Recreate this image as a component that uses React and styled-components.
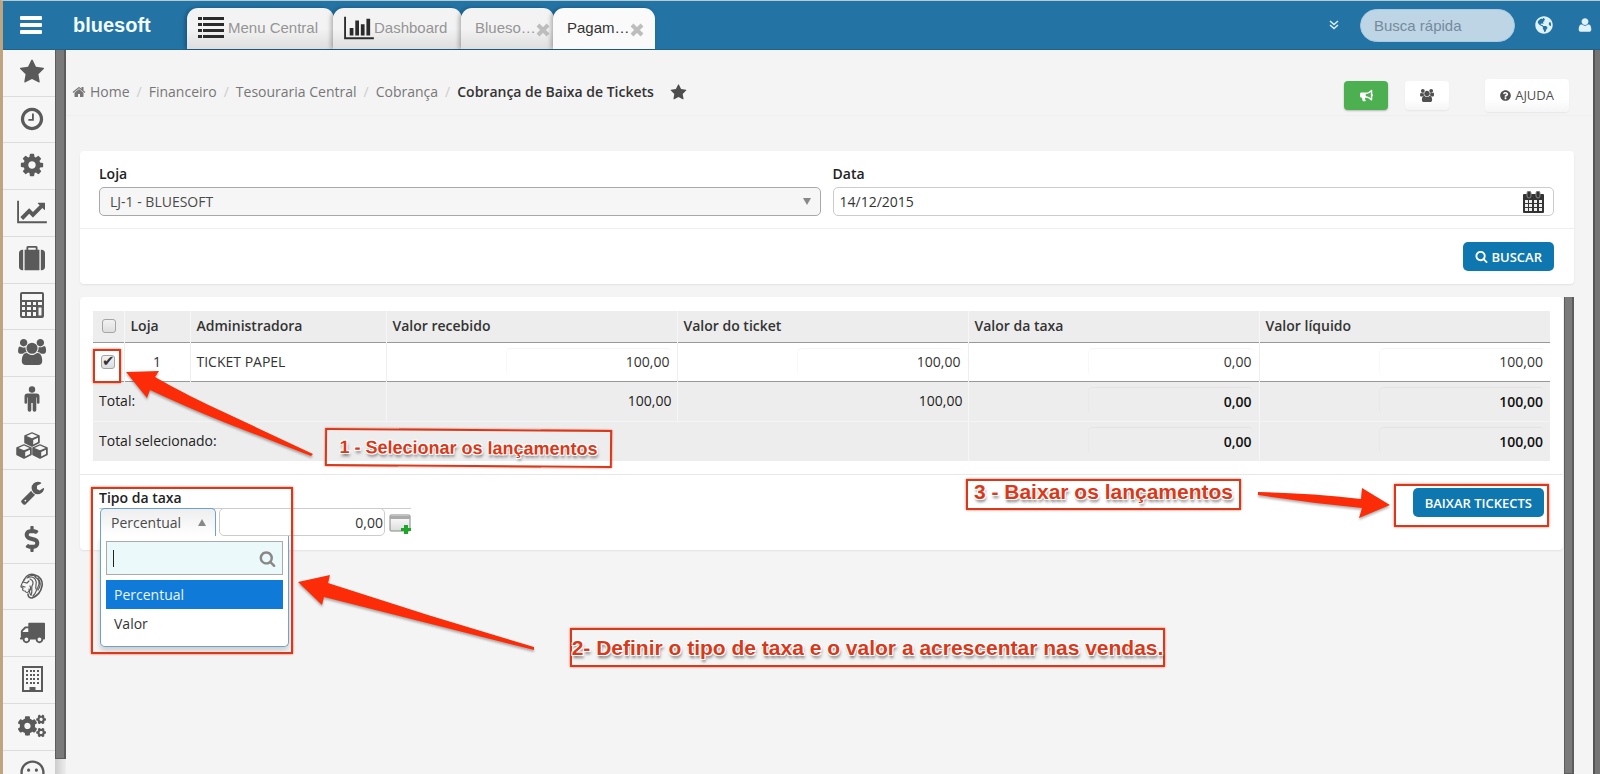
import React from "react";
import styled, { createGlobalStyle, css } from "styled-components";
import {
  FaBullhorn,
  FaCogs,
  FaDollarSign,
  FaGlobeAmericas,
  FaQuestionCircle,
  FaRegSmile,
} from "react-icons/fa";

const GlobalStyle = createGlobalStyle`
  * {
    box-sizing: border-box;
  }
  body {
    margin: 0;
    background: #f4f4f4;
    color: #333;
    font-family: "Open Sans", "Noto Sans", sans-serif;
    font-size: 14px;
    line-height: 20px;
    overflow: hidden;
  }
  button,
  input,
  select {
    font-family: inherit;
    font-size: 14px;
    margin: 0;
  }
`;

/* ---------- icons ---------- */

const paths = {
  star: "M1728 647q0 22-26 48l-363 354 86 500q1 7 1 20 0 21-10.5 35.5t-30.5 14.5q-19 0-40-12l-449-236-449 236q-22 12-40 12-21 0-31.5-14.5t-10.5-35.5q0-6 2-20l86-500-364-354q-25-27-25-48 0-37 56-46l502-73 225-455q19-41 49-41t49 41l225 455 502 73q56 9 56 46z",
  users:
    "M593 896q-162 5-265 128h-134q-82 0-138-40.5t-56-118.5q0-353 124-353 6 0 43.5 21t97.5 42.5 119 21.5q67 0 133-23-5 37-5 66 0 159 93 287zm1071 637q0 120-73 189.5t-194 69.5h-874q-121 0-194-69.5t-73-189.5q0-53 3.5-103.5t14-109 26.5-108.5 43-97.5 62-81 85.5-53.5 111.5-20q10 0 43 21.5t73 48 107 48 135 21.5 135-21.5 107-48 73-48 43-21.5q61 0 111.5 20t85.5 53.5 62 81 43 97.5 26.5 108.5 14 109 3.5 103.5zm-1024-1277q0 106-75 181t-181 75-181-75-75-181 75-181 181-75 181 75 75 181zm704 384q0 159-112.5 271.5t-271.5 112.5-271.5-112.5-112.5-271.5 112.5-271.5 271.5-112.5 271.5 112.5 112.5 271.5zm576 225q0 78-56 118.5t-138 40.5h-134q-103-123-265-128 93-128 93-287 0-29-5-66 66 23 133 23 59 0 119-21.5t97.5-42.5 43.5-21q124 0 124 353zm-128-609q0 106-75 181t-181 75-181-75-75-181 75-181 181-75 181 75 75 181z",
  clock:
    "M1024 544v448q0 14-9 23t-23 9h-320q-14 0-23-9t-9-23v-64q0-14 9-23t23-9h224v-352q0-14 9-23t23-9h64q14 0 23 9t9 23zm416 352q0-148-73-273t-198-198-273-73-273 73-198 198-73 273 73 273 198 198 273 73 273-73 198-198 73-273zm224 0q0 209-103 385.5t-279.5 279.5-385.5 103-385.5-103-279.5-279.5-103-385.5 103-385.5 279.5-279.5 385.5-103 385.5 103 279.5 279.5 103 385.5z",
  cog: "M1152 896q0-106-75-181t-181-75-181 75-75 181 75 181 181 75 181-75 75-181zm512-109v222q0 12-8 23t-20 13l-185 28q-19 54-39 91 35 50 107 138 10 12 10 25t-9 23q-27 37-99 108t-94 71q-12 0-26-9l-138-108q-44 23-91 38-16 136-29 186-7 28-36 28h-222q-14 0-24.5-8.5t-11.5-21.5l-28-184q-49-16-90-37l-141 107q-10 9-25 9-14 0-25-11-126-114-165-168-7-10-7-23 0-12 8-23 15-21 51-66.5t54-70.5q-27-50-41-99l-183-27q-13-2-21-12.5t-8-23.5v-222q0-12 8-23t19-13l186-28q14-46 39-92-40-57-107-138-10-12-10-24 0-10 9-23 26-36 98.5-107.5t94.5-71.5q13 0 26 10l138 107q44-23 91-38 16-136 29-186 7-28 36-28h222q14 0 24.5 8.5t11.5 21.5l28 184q49 16 90 37l142-107q9-9 24-9 13 0 25 10 129 119 165 170 7 8 7 22 0 12-8 23-15 21-51 66.5t-54 70.5q26 50 41 98l183 28q13 2 21 12.5t8 23.5z",
  home: "M1472 992v480q0 26-19 45t-45 19h-384v-384h-256v384h-384q-26 0-45-19t-19-45v-480q0-1 .5-3t.5-3l575-474 575 474q1 2 1 6zm223-69l-62 74q-8 9-21 11h-3q-13 0-21-7l-692-577-692 577q-12 8-24 7-13-2-21-11l-62-74q-8-10-7-23.5t11-21.5l719-599q32-26 76-26t76 26l244 204v-195q0-14 9-23t23-9h192q14 0 23 9t9 23v408l219 182q10 8 11 21.5t-7 23.5z",
  search:
    "M1216 832q0-185-131.5-316.5t-316.5-131.5-316.5 131.5-131.5 316.5 131.5 316.5 316.5 131.5 316.5-131.5 131.5-316.5zm512 832q0 52-38 90t-90 38q-54 0-90-38l-343-342q-179 124-399 124-143 0-273.5-55.5t-225-150-150-225-55.5-273.5 55.5-273.5 150-225 225-150 273.5-55.5 273.5 55.5 225 150 150 225 55.5 273.5q0 220-124 399l343 343q37 37 37 90z",
  lineChart:
    "M2048 1536v128h-2048v-1536h128v1408h1920zm-128-1248v435q0 21-19.5 29.5t-35.5-7.5l-121-121-633 633q-10 10-23 10t-23-10l-233-233-416 416-192-192 585-585q10-10 23-10t23 10l233 233 464-464-121-121q-16-16-7.5-35.5t29.5-19.5h435q14 0 23 9t9 23z",
  barChart:
    "M640 896v512h-256v-512h256zm384-512v1024h-256v-1024h256zm1024 1152v128h-2048v-1536h128v1408h1920zm-640-896v768h-256v-768h256zm384-384v1152h-256v-1152h256z",
  truck:
    "M640 1408q0-52-38-90t-90-38-90 38-38 90 38 90 90 38 90-38 38-90zm-384-512h384v-256h-158q-13 0-22 9l-195 195q-9 9-9 22v30zm1280 512q0-52-38-90t-90-38-90 38-38 90 38 90 90 38 90-38 38-90zm256-1088v1024q0 15-4 26.5t-13.5 18.5-16.5 11.5-23.5 6-22.5 2-25.5 0-22.5-.5q0 106-75 181t-181 75-181-75-75-181h-384q0 106-75 181t-181 75-181-75-75-181h-64q-3 0-22.5.5t-25.5 0-22.5-2-23.5-6-16.5-11.5-13.5-18.5-4-26.5q0-26 19-45t45-19v-320q0-8-.5-35t0-38 2.5-34.5 6.5-37 14-30.5 22.5-30l198-198q19-19 50.5-32t58.5-13h160v-192q0-26 19-45t45-19h1024q26 0 45 19t19 45z",
  suitcase:
    "M640 256h512v-128h-512v128zm-352 0v1408h-64q-92 0-158-66t-66-158v-960q0-92 66-158t158-66h64zm1120 0v1408h-1024v-1408h128v-160q0-40 28-68t68-28h576q40 0 68 28t28 68v160h128zm384 224v960q0 92-66 158t-158 66h-64v-1408h64q92 0 158 66t66 158z",
  user: "M1600 1405q0 120-73 189.5t-194 69.5h-874q-121 0-194-69.5t-73-189.5q0-53 3.5-103.5t14-109 26.5-108.5 43-97.5 62-81 85.5-53.5 111.5-20q9 0 42 21.5t74.5 48 108 48 133.5 21.5 133.5-21.5 108-48 74.5-48 42-21.5q61 0 111.5 20t85.5 53.5 62 81 43 97.5 26.5 108.5 14 109 3.5 103.5zm-320-893q0 159-112.5 271.5t-271.5 112.5-271.5-112.5-112.5-271.5 112.5-271.5 271.5-112.5 271.5 112.5 112.5 271.5z",
  wrench:
    "M448 1472q0-26-19-45t-45-19-45 19-19 45 19 45 45 19 45-19 19-45zm644-420l-682 682q-37 37-90 37-52 0-91-37l-106-108q-38-36-38-90 0-53 38-91l681-681q39 98 114.5 173.5t173.5 114.5zm634-435q0 39-23 106-47 134-164.5 217.5t-258.5 83.5q-185 0-316.5-131.5t-131.5-316.5 131.5-316.5 316.5-131.5q58 0 121.5 16.5t107.5 46.5q16 11 16 28t-16 28l-293 169v224l193 107q5-3 79-48.5t135.5-81 70.5-35.5q15 0 23.5 10t8.5 25z",
};

const Glyph = ({ name, size = 26, wide = 1792 }) => (
  <svg
    width={Math.round((size * wide) / 1792)}
    height={size}
    viewBox={`0 0 ${wide} 1792`}
    fill="currentColor"
    aria-hidden="true"
  >
    <path d={paths[name]} />
  </svg>
);

const BarsIcon = () => (
  <svg width="22" height="19" viewBox="0 0 22 19" fill="#fff" aria-hidden="true">
    <rect width="22" height="4" rx="1" />
    <rect y="7" width="22" height="4" rx="1" />
    <rect y="14" width="22" height="4" rx="1" />
  </svg>
);

const ListIcon = () => (
  <svg width="26" height="21" viewBox="0 0 26 21" fill="#2b2b2b" aria-hidden="true">
    {[0, 6, 12, 18].map(y => (
      <g key={y}>
        <rect y={y} width="4" height="3" />
        <rect x="5" y={y} width="21" height="3" />
      </g>
    ))}
  </svg>
);

const ChevronsIcon = () => (
  <svg
    width="10"
    height="10"
    viewBox="0 0 10 10"
    fill="none"
    stroke="currentColor"
    strokeWidth="1.400"
    aria-hidden="true"
  >
    <path d="M1 1l4 3.500L9 1M1 5l4 3.500L9 5" />
  </svg>
);

const CloseIcon = () => (
  <svg
    width="14"
    height="14"
    viewBox="0 0 14 14"
    stroke="currentColor"
    strokeWidth="4"
    aria-hidden="true"
  >
    <path d="M2 2l10 10M12 2L2 12" />
  </svg>
);

const MaleIcon = () => (
  <svg width="16" height="26" viewBox="0 0 16 26" fill="currentColor" aria-hidden="true">
    <circle cx="8" cy="3.500" r="3.200" />
    <path d="M3.500 7.500h9a3 3 0 0 1 3 3v6a1.300 1.300 0 0 1-2.600 0v-5h-.6v12.500a1.700 1.700 0 0 1-3.600 0v-7h-1.400v7a1.700 1.700 0 0 1-3.600 0V11.500h-.6v5a1.300 1.300 0 0 1-2.600 0v-6a3 3 0 0 1 3-3z" />
  </svg>
);

const CalculatorIcon = () => (
  <svg width="24" height="26" viewBox="0 0 24 26" fill="currentColor" aria-hidden="true">
    <path
      fillRule="evenodd"
      d="M2 0h20a2 2 0 0 1 2 2v22a2 2 0 0 1-2 2H2a2 2 0 0 1-2-2V2a2 2 0 0 1 2-2zM2 2v6h20V2zM2 10v3h3v-3zM7 10v3h4v-3zM13 10v3h3v-3zM18 10v3h4v-3zM2 15v3h3v-3zM7 15v3h4v-3zM13 15v3h3v-3zM2 20v4h3v-4zM7 20v4h4v-4zM13 20v4h3v-4zM18.500 15.500v8h3v-8z"
    />
  </svg>
);

const CubesIcon = () => (
  <svg width="32" height="27" viewBox="0 0 32 27" aria-hidden="true">
    {[
      [8, 0],
      [0, 12],
      [16, 12],
    ].map(([x, y]) => (
      <g key={x} transform={`translate(${x} ${y})`}>
        <path
          d="M8 1l7 3v6.500l-7 3.500-7-3.500V4z"
          fill="currentColor"
          stroke="currentColor"
          strokeWidth="1.500"
          strokeLinejoin="round"
        />
        <path d="M8 1.500L13.500 4 8 6.300 2.500 4z" fill="#f6f6f6" />
        <path d="M9.200 8l4.800-2.200v4.200l-4.800 2.400z" fill="#f6f6f6" />
      </g>
    ))}
  </svg>
);

const BuildingIcon = () => (
  <svg width="21" height="26" viewBox="0 0 21 26" fill="currentColor" aria-hidden="true">
    <path fillRule="evenodd" d="M0 0h21v26H0zM2 2v22h5.500v-3h6v3H19V2z" />
    {[5, 9, 13, 17].map(y =>
      [4, 8, 11, 15].map(x => <rect key={`${x}${y}`} x={x} y={y - 1} width="2" height="2" />)
    )}
  </svg>
);

const LionIcon = () => (
  <svg
    width="24"
    height="26"
    viewBox="0 0 24 26"
    fill="none"
    stroke="currentColor"
    strokeWidth="1.200"
    strokeLinecap="round"
    aria-hidden="true"
  >
    <path d="M4 7C6 2 11 0 15 2c5 1 8 6 7 11-1 6-5 10-10 12-3 0-4-2-4-4" strokeWidth="1.600" />
    <path d="M4 7c-2 3-3 5-3 7l2 1c-1 2 0 3 2 3 1 2 3 2 4 0 2-1 2-3 1-5" />
    <path d="M3 9l4 1 2-2M2 13l3 1M7 5c4-2 8-1 9 3 1 3-1 5 0 8M10 6c3 1 4 4 2 7-1 3 1 5-1 9" />
    <path d="M15 4c4 2 5 6 3 10-2 3-1 5-5 9M18 5c3 4 3 8 0 12M8 4c3-2 6-2 8 0M9 16c1 3 0 5 2 6" />
  </svg>
);

const CalendarIcon = () => (
  <svg width="21" height="22" viewBox="0 0 21 22" aria-hidden="true">
    <rect y="3" width="21" height="19" rx="1" fill="#333" />
    <rect x="4" width="4" height="7" rx="2" fill="#333" stroke="#888" />
    <rect x="13" width="4" height="7" rx="2" fill="#333" stroke="#888" />
    {[9, 13, 17].map(y =>
      [2, 6, 11, 16].map(x => <rect key={`${x}-${y}`} x={x} y={y} width="3" height="3" fill="#eee" />)
    )}
  </svg>
);

const AddWindowIcon = () => (
  <svg width="22" height="20" viewBox="0 0 22 20" aria-hidden="true">
    <defs>
      <linearGradient id="pane" x1="0" y1="0" x2="0" y2="1">
        <stop offset="0" stopColor="#fff" />
        <stop offset="1" stopColor="#dcdcdc" />
      </linearGradient>
    </defs>
    <rect x="1" y="1" width="20" height="16" rx="1" fill="url(#pane)" stroke="#888" />
    <path d="M1 2h20v3H1z" fill="#aaa" />
    <path d="M15 11h4v3h3v3h-3v3h-4v-3h-3v-3h3z" fill="#1ea62a" />
  </svg>
);

/* ---------- shell ---------- */

const Shell = styled.div`
  height: 100vh;
  display: flex;
  flex-direction: column;
  border-top: 1px solid #b5cbd0;
  border-left: 3px solid #bfa57f;
  overflow: hidden;
`;

const Header = styled.header`
  flex: none;
  height: 49px;
  display: flex;
  align-items: center;
  background: #2374a5;
  border-bottom: 1px solid #1e648f;
  color: #fff;
`;

const MenuButton = styled.button`
  display: flex;
  padding: 0;
  margin-left: 17px;
  border: 0;
  background: none;
  cursor: pointer;
`;

const Logo = styled.a`
  width: 114px;
  margin-left: 31px;
  color: #f2fbff;
  font-family: "Liberation Sans Narrow", "Liberation Sans", sans-serif;
  font-size: 20px;
  font-weight: bold;
  line-height: 40px;
  text-decoration: none;
`;

const Tabs = styled.nav`
  align-self: flex-end;
  display: flex;
`;

const Tab = styled.a`
  height: 41px;
  display: flex;
  align-items: center;
  gap: ${p => p.$gap || 0}px;
  padding: ${p => (p.$closable ? "0 0 2px 14px" : "0 12px 2px 11px")};
  margin-right: ${p => (p.$last ? 0 : "-1px")};
  width: ${p => p.$width}px;
  border-radius: 11px 11px 0 0;
  background: ${p => (p.$active ? "#fafafa" : "linear-gradient(#f3f3f3 50%, #dedede)")};
  box-shadow: -2px 0 4px rgba(0, 0, 0, 0.28);
  color: ${p => (p.$active ? "#333" : "#959595")};
  font-family: "Liberation Sans", sans-serif;
  font-size: 15px;
  text-decoration: none;
  white-space: nowrap;
  svg {
    flex: none;
  }
`;

const TabIcon = styled.span`
  display: flex;
  color: #2b2b2b;
`;

const TabClose = styled.span`
  display: flex;
  padding-top: 5px;
  color: #bdbdbd;
`;

const HeaderTools = styled.div`
  margin-left: auto;
  padding-right: 7px;
  display: flex;
  align-items: center;
  color: #dff1fb;
`;

const QuickSearch = styled.input`
  width: 155px;
  height: 33px;
  padding: 0 13px;
  border: 1px solid #a9cbe0;
  border-radius: 17px;
  background: #bdd5e5;
  font-family: "Liberation Sans", sans-serif;
  font-size: 15px;
  && {
    margin: 0 20px 0 21px;
  }
  &::placeholder {
    color: #758b9b;
    opacity: 1;
  }
`;

const ToolButton = styled.button`
  display: flex;
  padding: 0;
  margin-right: ${p => p.$gap || 0}px;
  border: 0;
  background: none;
  color: inherit;
  cursor: pointer;
`;

const Body = styled.div`
  flex: 1;
  min-height: 0;
  display: flex;
`;

const Sidebar = styled.nav`
  flex: none;
  width: 52px;
  display: grid;
  grid-auto-rows: calc(100% / 15.5);
  background: #f6f6f6;
  overflow: hidden;
`;

const SideLink = styled.a`
  display: flex;
  align-items: center;
  justify-content: center;
  padding: 0 0 2px 6px;
  border-bottom: 1px solid #dcdcdc;
  color: #5a5a5a;
  svg {
    flex: none;
  }
`;

const SideTrack = styled.div`
  flex: none;
  width: 11px;
  padding-bottom: 15px;
  background: linear-gradient(90deg, #ccc, #eee);
`;

const Thumb = styled.div`
  height: 100%;
  background: #7a7a7a;
  border: solid #5c5c5c;
  border-width: 0 2px 1px 1px;
`;

const RightEdge = styled.div`
  flex: none;
  width: 7px;
  background: #757575;
  border-left: 2px solid #555;
`;

const Content = styled.main`
  position: relative;
  flex: 1;
  min-width: 0;
  display: flex;
  flex-direction: column;
  background: #f4f4f4;
`;

/* ---------- page header ---------- */

const PageHead = styled.div`
  flex: none;
  height: 66px;
  display: flex;
  justify-content: space-between;
  padding: 28px 24px 0 6px;
  border-bottom: 1px solid #efefef;
`;

const Crumbs = styled.ol`
  display: flex;
  align-items: center;
  height: 28px;
  margin: 0;
  padding: 0;
  list-style: none;
  color: #777;
`;

const Crumb = styled.li`
  display: flex;
  align-items: center;
  gap: 4px;
  & + &::before {
    content: "/";
    padding: 0 3px 0 7px;
    color: #ccc;
  }
  a {
    color: inherit;
    text-decoration: none;
  }
  strong {
    color: #333;
    font-weight: 600;
  }
`;

const Favorite = styled.button`
  display: flex;
  padding: 0 0 0 16px;
  border: 0;
  background: none;
  color: #4d4d4d;
`;

const PageActions = styled.div`
  display: flex;
  align-items: center;
  height: 34px;
`;

const ActionButton = styled.button`
  height: ${p => (p.$tall ? 33 : 29)}px;
  min-width: 44px;
  padding: 0 15px;
  display: flex;
  align-items: center;
  justify-content: center;
  gap: 4px;
  border: 0;
  border-radius: 4px;
  background: ${p => (p.$green ? "#4caf50" : "linear-gradient(#fff 60%, #f5f5f5)")};
  color: ${p => (p.$green ? "#fff" : "#505050")};
  box-shadow: 0 1px 2px rgba(0, 0, 0, ${p => (p.$green ? 0.25 : 0.06)});
  && {
    margin-left: ${p => p.$gap || 0}px;
    font-size: 13px;
  }
`;

/* ---------- cards and forms ---------- */

const cardLook = css`
  background: #fff;
  border-radius: 4px;
  box-shadow: 0 1px 2px rgba(0, 0, 0, 0.08);
`;

const FilterCard = styled.form`
  ${cardLook}
  flex: none;
  margin: 35px 19px 0 14px;
`;

const FilterFields = styled.div`
  display: grid;
  grid-template-columns: 1fr 1fr;
  gap: 12px;
  padding: 13px 20px 12px 19px;
`;

const Field = styled.div`
  display: flex;
  flex-direction: column;
  gap: 3px;
`;

const Label = styled.label`
  color: #222;
  font-weight: 600;
  line-height: 20px;
`;

const Control = styled.div`
  display: flex;
  align-items: center;
  height: 29px;
  padding-right: 9px;
  border: 1px solid ${p => (p.$select ? "#a9a9a9" : "#ccc")};
  border-radius: 5px;
  background: ${p => (p.$select ? "#f6f6f6" : "#fff")};
`;

const BareInput = styled.input`
  flex: 1;
  min-width: 0;
  padding: 0 6px;
  border: 0;
  outline: 0;
  background: none;
  color: #333;
`;

const BareSelect = styled.select`
  flex: 1;
  min-width: 0;
  appearance: none;
  padding: 0 10px;
  border: 0;
  outline: 0;
  background: none;
  color: #4a4a4a;
`;

const Caret = styled.span`
  width: 0;
  height: 0;
  border: solid transparent;
  border-width: ${p => (p.$up ? "0 4px 7px" : "7px 4px 0")};
  border-${p => (p.$up ? "bottom" : "top")}-color: #888;
`;

const CardFoot = styled.div`
  display: flex;
  justify-content: flex-end;
  padding: 13px 20px 13px;
  border-top: 1px solid #eee;
`;

const PrimaryButton = styled.button`
  height: 29px;
  padding: 0 12px;
  display: flex;
  align-items: center;
  gap: 3px;
  border: 0;
  border-radius: 5px;
  background: #0f77b0;
  color: #fff;
  font-weight: 600;
  white-space: nowrap;
  && {
    font-size: 13px;
  }
`;

/* ---------- results ---------- */

const Results = styled.div`
  flex: 1;
  min-height: 0;
  display: flex;
  align-items: flex-start;
  gap: 1px;
  margin: 13px 19px 0 14px;
`;

const ResultCard = styled.section`
  ${cardLook}
  flex: 1;
  min-width: 0;
`;

const TableWrap = styled.div`
  padding: 14px 13px 13px;
  border-bottom: 1px solid #e8e8e8;
`;

const Table = styled.table`
  width: 100%;
  table-layout: fixed;
  border-collapse: collapse;
  th {
    height: 31px;
    padding: 0 6px;
    background: #ededed;
    border-right: 1px solid #f6f6f6;
    font-weight: 600;
    text-align: left;
  }
  td {
    height: 39px;
    padding: 0 5px;
    border-right: 1px solid #eee;
    text-align: right;
  }
  tbody tr {
    border-top: 1px solid #999;
    border-bottom: 1px solid #999;
  }
  tfoot tr + tr {
    border-top: 1px solid #f4f4f4;
  }
  tfoot td {
    height: 40px;
    background: #ededed;
    border-right-color: #f6f6f6;
    color: #222;
  }
  td:last-child,
  th:last-child {
    border-right: 0;
  }
`;

const NameCell = styled.td`
  && {
    padding-left: 6px;
    font-weight: ${p => (p.$total ? 500 : 400)};
    text-align: left;
  }
`;

const StoreCell = styled.td`
  && {
    text-align: center;
  }
`;

const Check = styled.input`
  appearance: none;
  display: block;
  width: 14px;
  height: 14px;
  border: 1px solid #a5a5a5;
  border-radius: 3px;
  background: linear-gradient(#f2f2f2, #dedede);
  && {
    margin: 0 3px;
  }
  &:checked::after {
    content: "✔";
    display: block;
    color: #333;
    font: 15px/11px "DejaVu Sans", sans-serif;
  }
`;

const Amount = styled.input`
  width: 166px;
  max-width: 100%;
  height: 28px;
  padding: 0 1px;
  border: 1px solid transparent;
  border-top-color: ${p => (p.$strong ? "#e3e3e3" : "#f4f4f4")};
  border-left-color: ${p => (p.$strong ? "#e8e8e8" : "#f8f8f8")};
  border-radius: 5px;
  background: none;
  color: ${p => (p.$strong ? "#111" : "#333")};
  font-weight: ${p => (p.$strong ? 600 : 400)};
  text-align: right;
`;

const RateBar = styled.div`
  display: flex;
  justify-content: space-between;
  align-items: flex-start;
  height: 75px;
  padding: 13px 19px 0;
`;

const RateRow = styled.div`
  display: flex;
  align-items: flex-start;
  width: 312px;
  border-top: 1px solid #ccc;
`;

const Picker = styled.div`
  position: relative;
  width: 117px;
  margin: -1px 3px 0 1px;
`;

const PickerControl = styled.div`
  display: flex;
  align-items: center;
  height: 28px;
  padding-right: 9px;
  border: 1px solid #6ba3d0;
  border-bottom: 0;
  border-radius: 5px 5px 0 0;
  background: linear-gradient(#eee, #fff);
`;

const Menu = styled.div`
  position: absolute;
  top: 28px;
  left: 0;
  width: 189px;
  padding: 5px 5px 8px;
  border: 1px solid #6ba3d0;
  border-top: 0;
  border-radius: 0 0 5px 5px;
  background: #fff;
  box-shadow: 0 4px 5px rgba(0, 0, 0, 0.15);
`;

const MenuSearch = styled.label`
  display: flex;
  align-items: center;
  height: 34px;
  margin-bottom: 5px;
  padding-right: 6px;
  border: 1px solid #aaa;
  background: #ecf9fb;
  color: #888;
`;

const Cursor = styled.span`
  width: 1px;
  height: 17px;
  margin-left: 6px;
  background: #222;
`;

const Options = styled.ul`
  margin: 0;
  padding: 0;
  list-style: none;
`;

const Option = styled.li`
  height: 29px;
  padding: 0 8px;
  background: ${p => (p.$on ? "#0f7ad8" : "#fff")};
  color: ${p => (p.$on ? "#e8f6ff" : "#333")};
  line-height: 29px;
`;

const RateValue = styled.input`
  width: 166px;
  height: 28px;
  padding: 0 1px;
  border: 1px solid #ccc;
  border-radius: 5px;
  text-align: right;
  color: #333;
  && {
    margin: -1px 4px 0 0;
  }
`;

const AddButton = styled.button`
  display: flex;
  padding: 5px 0 0;
  border: 0;
  background: none;
`;

const ResultTrack = styled.div`
  flex: none;
  align-self: stretch;
  width: 10px;
`;

/* ---------- tutorial callouts, drawn above the page ---------- */

const Callout = styled.div`
  position: absolute;
  left: ${p => (p.$left !== undefined ? `${p.$left}px` : "auto")};
  right: ${p => (p.$right !== undefined ? `${p.$right}px` : "auto")};
  top: ${p => p.$top}px;
  width: ${p => p.$width}px;
  height: ${p => p.$height}px;
  display: flex;
  align-items: ${p => (p.$high ? "flex-start" : "center")};
  justify-content: center;
  border: 2px solid #d9391b;
  transform: ${p => (p.$tilt ? "rotate(0.4deg)" : "none")};
  box-shadow: 0 0 2px rgba(217, 57, 27, 0.8);
  color: #d9391b;
  font: bold ${p => p.$size || 18}px/22px "Liberation Sans", sans-serif;
  text-shadow: -1px -1px 0 #fff, 1px -1px 0 #fff, -1px 1px 0 #fff, 1px 1px 0 #fff,
    1px 3px 3px rgba(0, 0, 0, 0.5);
  white-space: nowrap;
  pointer-events: none;
`;

const Arrow = styled.svg`
  position: absolute;
  left: ${p => (p.$left !== undefined ? `${p.$left}px` : "auto")};
  right: ${p => (p.$right !== undefined ? `${p.$right}px` : "auto")};
  top: ${p => p.$top}px;
  overflow: visible;
  fill: #fb2c07;
  filter: drop-shadow(0 2px 1px rgba(0, 0, 0, 0.3));
  pointer-events: none;
`;

const sideItems = [
  ["Favoritos", <Glyph name="star" />],
  ["Recentes", <Glyph name="clock" />],
  ["Configurações", <Glyph name="cog" />],
  ["Indicadores", <Glyph name="lineChart" wide={2048} />],
  ["Comercial", <Glyph name="suitcase" />],
  ["Contabilidade", <CalculatorIcon />],
  ["Pessoas", <Glyph name="users" wide={1920} />],
  ["Cliente", <MaleIcon />],
  ["Estoque", <CubesIcon />],
  ["Ferramentas", <Glyph name="wrench" size={25} />],
  ["Financeiro", <FaDollarSign size={26} />],
  ["Fiscal", <LionIcon />],
  ["Logística", <Glyph name="truck" />],
  ["Empresa", <BuildingIcon />],
  ["Sistema", <FaCogs size={28} />],
  ["Suporte", <FaRegSmile size={25} />],
];

const crumbs = ["Financeiro", "Tesouraria Central", "Cobrança"];

class App extends React.Component {
  state = {
    data: "14/12/2015",
    busca: "",
    filtro: "",
    taxa: "0,00",
    tipo: "Percentual",
    todos: false,
    selecionado: true,
  };

  handleChange = e => {
    const { name, type, checked, value } = e.target;
    this.setState({ [name]: type === "checkbox" ? checked : value });
  };

  render() {
    const { data, busca, filtro, taxa, tipo, todos, selecionado } = this.state;

    return (
      <Shell>
        <GlobalStyle />
        <Header>
          <MenuButton aria-label="Menu">
            <BarsIcon />
          </MenuButton>
          <Logo href="#">bluesoft</Logo>
          <Tabs>
            <Tab href="#" $width={147} $gap={4}>
              <ListIcon />
              Menu Central
            </Tab>
            <Tab href="#" $width={129}>
              <TabIcon>
                <Glyph name="barChart" size={26} wide={2048} />
              </TabIcon>
              Dashboard
            </Tab>
            <Tab href="#" $width={93} $closable>
              Blueso…
              <TabClose>
                <CloseIcon />
              </TabClose>
            </Tab>
            <Tab href="#" $width={102} $closable $active $last>
              Pagam…
              <TabClose>
                <CloseIcon />
              </TabClose>
            </Tab>
          </Tabs>
          <HeaderTools>
            <ToolButton aria-label="Mais abas">
              <ChevronsIcon />
            </ToolButton>
            <QuickSearch
              name="busca"
              aria-label="Busca rápida"
              placeholder="Busca rápida"
              value={busca}
              onChange={this.handleChange}
            />
            <ToolButton aria-label="Idioma" $gap={24}>
              <FaGlobeAmericas size={18} />
            </ToolButton>
            <ToolButton aria-label="Usuário">
              <Glyph name="user" size={16} />
            </ToolButton>
          </HeaderTools>
        </Header>

        <Body>
          <Sidebar>
            {sideItems.map(([name, icon]) => (
              <SideLink key={name} href="#" aria-label={name}>
                {icon}
              </SideLink>
            ))}
          </Sidebar>
          <SideTrack>
            <Thumb />
          </SideTrack>

          <Content>
            <PageHead>
              <Crumbs>
                <Crumb>
                  <Glyph name="home" size={14} />
                  <a href="#">Home</a>
                </Crumb>
                {crumbs.map(c => (
                  <Crumb key={c}>
                    <a href="#">{c}</a>
                  </Crumb>
                ))}
                <Crumb>
                  <strong>Cobrança de Baixa de Tickets</strong>
                </Crumb>
                <Favorite aria-label="Favoritar">
                  <Glyph name="star" size={17} />
                </Favorite>
              </Crumbs>
              <PageActions>
                <ActionButton $green aria-label="Novidades">
                  <FaBullhorn size={13} />
                </ActionButton>
                <ActionButton $gap={17} aria-label="Comunidade">
                  <Glyph name="users" size={13} wide={1920} />
                </ActionButton>
                <ActionButton $gap={36} $tall>
                  <FaQuestionCircle size={11} />
                  AJUDA
                </ActionButton>
              </PageActions>
            </PageHead>

            <FilterCard onSubmit={e => e.preventDefault()}>
              <FilterFields>
                <Field>
                  <Label htmlFor="loja">Loja</Label>
                  <Control $select>
                    <BareSelect id="loja">
                      <option>LJ-1 - BLUESOFT</option>
                    </BareSelect>
                    <Caret />
                  </Control>
                </Field>
                <Field>
                  <Label htmlFor="data">Data</Label>
                  <Control>
                    <BareInput id="data" name="data" value={data} onChange={this.handleChange} />
                    <CalendarIcon />
                  </Control>
                </Field>
              </FilterFields>
              <CardFoot>
                <PrimaryButton>
                  <Glyph name="search" size={13} />
                  BUSCAR
                </PrimaryButton>
              </CardFoot>
            </FilterCard>

            <Results>
              <ResultCard>
                <TableWrap>
                  <Table>
                    <colgroup>
                      <col width="31" />
                      <col width="66" />
                      <col width="196" />
                      <col />
                      <col />
                      <col />
                      <col />
                    </colgroup>
                    <thead>
                      <tr>
                        <th>
                          <Check
                            type="checkbox"
                            name="todos"
                            aria-label="Selecionar todos"
                            checked={todos}
                            onChange={this.handleChange}
                          />
                        </th>
                        <th>Loja</th>
                        <th>Administradora</th>
                        <th>Valor recebido</th>
                        <th>Valor do ticket</th>
                        <th>Valor da taxa</th>
                        <th>Valor líquido</th>
                      </tr>
                    </thead>
                    <tbody>
                      <tr>
                        <td>
                          <Check
                            type="checkbox"
                            name="selecionado"
                            aria-label="Selecionar TICKET PAPEL"
                            checked={selecionado}
                            onChange={this.handleChange}
                          />
                        </td>
                        <StoreCell>1</StoreCell>
                        <NameCell>TICKET PAPEL</NameCell>
                        {["100,00", "100,00", "0,00", "100,00"].map((v, i) => (
                          <td key={i}>
                            <Amount aria-label="Valor" defaultValue={v} />
                          </td>
                        ))}
                      </tr>
                    </tbody>
                    <tfoot>
                      <tr>
                        <NameCell $total colSpan={3}>
                          Total:
                        </NameCell>
                        <td>100,00</td>
                        <td>100,00</td>
                        <td>
                          <Amount $strong aria-label="Total da taxa" defaultValue="0,00" />
                        </td>
                        <td>
                          <Amount $strong aria-label="Total líquido" defaultValue="100,00" />
                        </td>
                      </tr>
                      <tr>
                        <NameCell $total colSpan={5}>
                          Total selecionado:
                        </NameCell>
                        <td>
                          <Amount $strong aria-label="Taxa selecionada" defaultValue="0,00" />
                        </td>
                        <td>
                          <Amount $strong aria-label="Líquido selecionado" defaultValue="100,00" />
                        </td>
                      </tr>
                    </tfoot>
                  </Table>
                </TableWrap>
                <RateBar>
                  <div>
                    <Label htmlFor="tipo">Tipo da taxa</Label>
                    <RateRow>
                      <Picker>
                        <PickerControl>
                          <BareSelect id="tipo" name="tipo" value={tipo} onChange={this.handleChange}>
                            <option>Percentual</option>
                            <option>Valor</option>
                          </BareSelect>
                          <Caret $up />
                        </PickerControl>
                        <Menu>
                          <MenuSearch>
                            <Cursor />
                            <BareInput
                              name="filtro"
                              aria-label="Filtrar"
                              value={filtro}
                              onChange={this.handleChange}
                            />
                            <Glyph name="search" size={17} />
                          </MenuSearch>
                          <Options role="listbox">
                            {["Percentual", "Valor"].map(o => (
                              <Option
                                key={o}
                                role="option"
                                aria-selected={o === tipo}
                                $on={o === tipo}
                                onClick={() => this.setState({ tipo: o })}
                              >
                                {o}
                              </Option>
                            ))}
                          </Options>
                        </Menu>
                      </Picker>
                      <RateValue
                        name="taxa"
                        aria-label="Valor da taxa"
                        value={taxa}
                        onChange={this.handleChange}
                      />
                      <AddButton aria-label="Aplicar taxa">
                        <AddWindowIcon />
                      </AddButton>
                    </RateRow>
                  </div>
                  <PrimaryButton>BAIXAR TICKECTS</PrimaryButton>
                </RateBar>
              </ResultCard>
              <ResultTrack>
                <Thumb />
              </ResultTrack>
            </Results>

            <Callout $left={27} $top={299} $width={28} $height={34} />
            <Callout $left={259} $top={379} $width={287} $height={38} $tilt>
              1 - Selecionar os lançamentos
            </Callout>
            <Callout $left={25} $top={437} $width={202} $height={167} />
            <Callout $left={504} $top={578} $width={595} $height={39} $size={21}>
              2- Definir o tipo de taxa e o valor a acrescentar nas vendas.
            </Callout>
            <Callout $right={352} $top={429} $width={275} $height={31} $size={21} $high>
              3 - Baixar os lançamentos
            </Callout>
            <Callout $right={44} $top={434} $width={155} $height={43} />

            <Arrow $left={60} $top={320} width="187" height="86" viewBox="0 0 187 86">
              <path d="M0 2L33 1L29 7Q60 25 104 45L187 84L185 86L100 53Q60 37 24 20L21 28Z" />
            </Arrow>
            <Arrow $left={232} $top={525} width="236" height="74" viewBox="0 0 236 74">
              <path d="M0 7L32 0L30 8L130 40L236 72L236 75L125 47L26 22L24 30Z" />
            </Arrow>
            <Arrow $right={203} $top={438} width="132" height="30" viewBox="0 0 132 30">
              <path d="M0 4Q52 5 103 11L104 0L132 17L101 30L104 20Q52 15 0 7Z" />
            </Arrow>
          </Content>
          <RightEdge />
        </Body>
      </Shell>
    );
  }
}

export default App;
